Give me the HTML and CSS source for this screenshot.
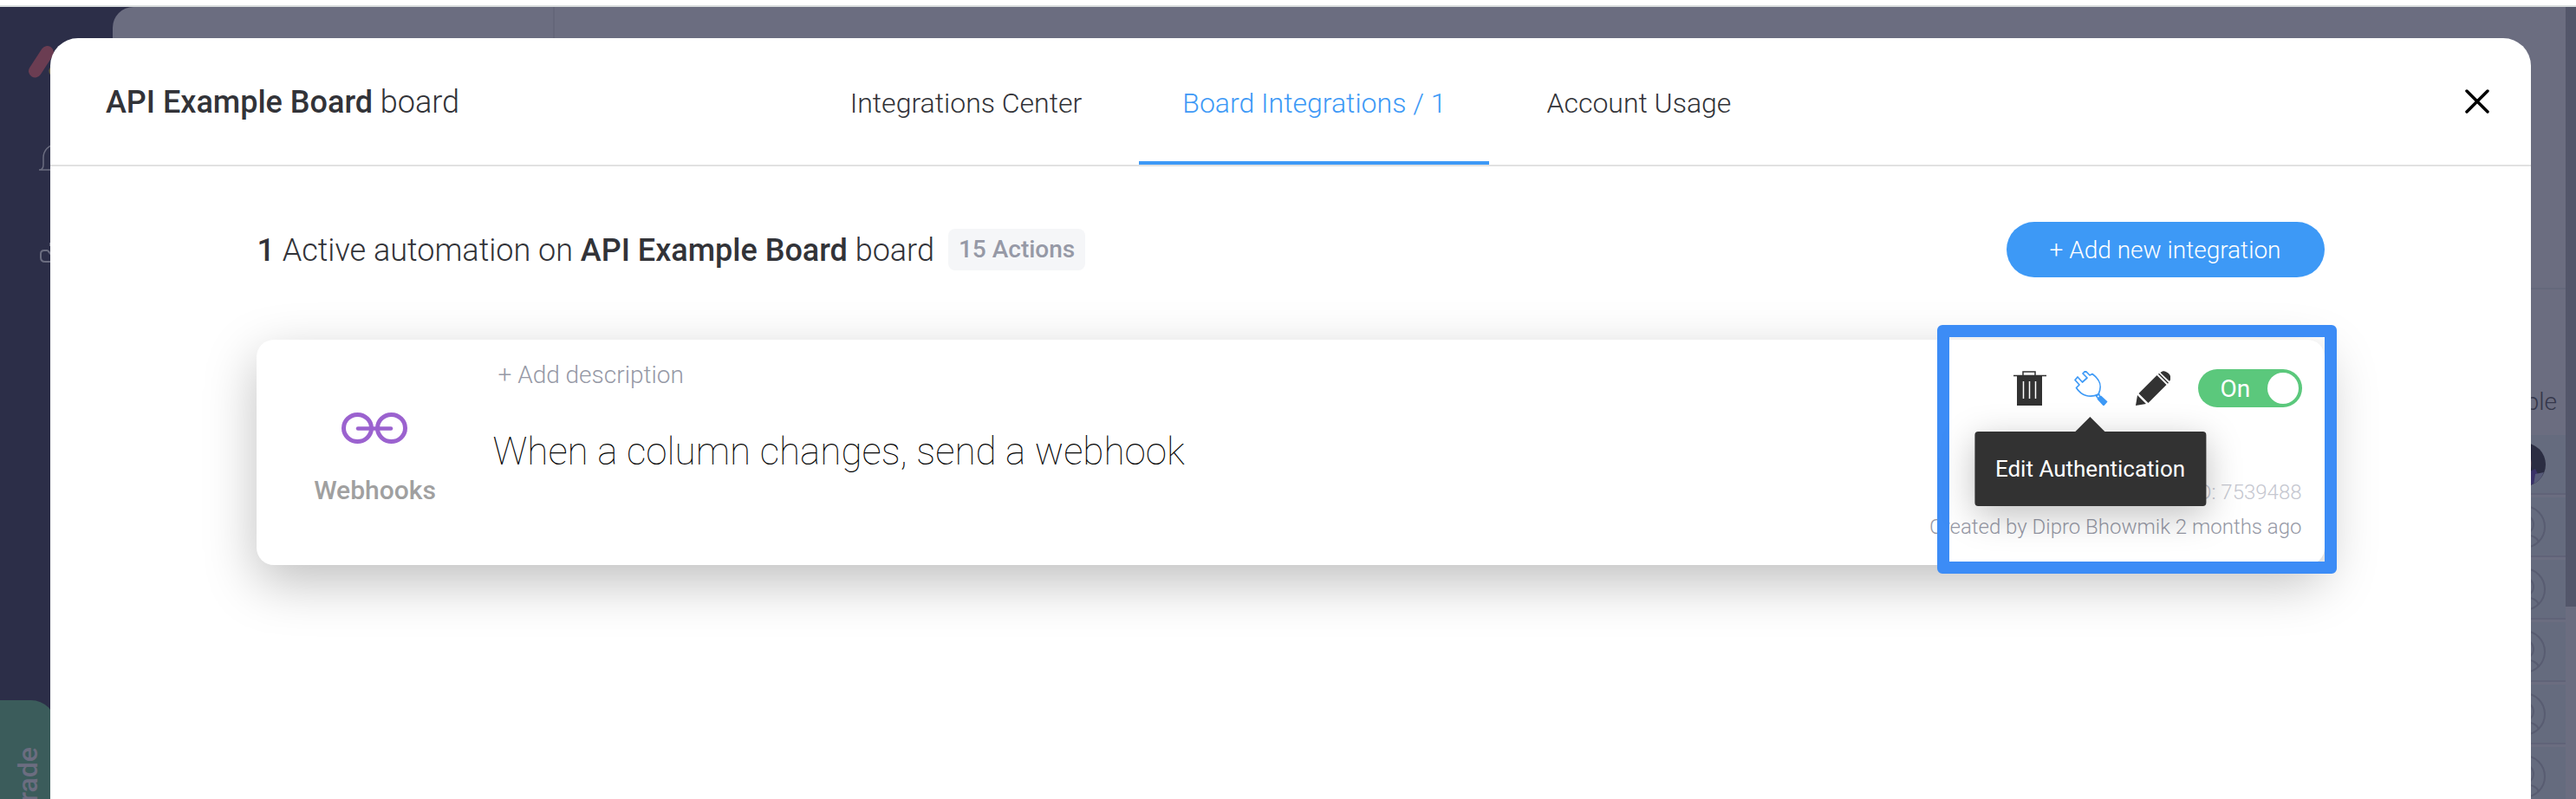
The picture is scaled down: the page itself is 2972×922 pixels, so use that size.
FILE: index.html
```html
<!DOCTYPE html>
<html lang="en">
<head>
<meta charset="utf-8">
<title>Board Integrations</title>
<link rel="stylesheet" href="styles.css">
</head>
<body>
<div class="browser-edge"></div>
<div class="stage">
  <div class="backdrop" aria-hidden="true">
    <div class="sidebar">
      <div class="sidebar-icons">
        <svg class="logo" width="96" height="48" viewBox="0 0 96 48">
          <path d="M22.5 12.500L8.500 34" stroke="#6b3d52" stroke-width="15" stroke-linecap="round"/>
          <path d="M46 12.500L32 34" stroke="#6c6440" stroke-width="15" stroke-linecap="round"/>
        </svg>
        <svg class="bell" width="40" height="40" viewBox="0 0 40 40" fill="none" stroke="#6b6d80" stroke-width="1.500">
          <path d="M1 31h38M1 31c4 0 5-2 5-6v-8C6 9 12 2 20 2s14 7 14 15v8c0 4 1 6 5 6M16 34a4 4 0 0 0 8 0"/>
        </svg>
        <svg class="inbox" width="40" height="26" viewBox="0 0 40 26" fill="none" stroke="#6b6d80" stroke-width="2">
          <path d="M10 10H6q-4 0-4 4v4q0 5 5 5h26q5 0 5-5v-4q0-4-4-4h-4M10 10l5 6h10l5-6M13 1v4"/>
        </svg>
      </div>
      <div class="upgrade"><span>Upgrade</span></div>
    </div>
    <div class="board">
      <div class="board-nav"></div>
      <div class="board-main">
        <div class="board-top"></div>
        <div class="people-head">People</div>
        <div class="people-row">
          <svg class="avatar" viewBox="0 0 50 50"><defs><clipPath id="round"><circle cx="25" cy="25" r="25"/></clipPath></defs><g clip-path="url(#round)"><path d="M0 0h50v50H0z" fill="#2b2d42"/><path d="M0 0h34v50H0z" fill="#20213a"/><path d="M28 14q8 3 5 16l-5 4z" fill="#4c3b4b"/><path d="M26 36l12-6 4 8-8 12h-8z" fill="#3a3268"/><path d="M38 36l10-2-6 12-6 3z" fill="#575b78"/></g></svg>
        </div>
        <div class="people-row"><svg class="person" viewBox="0 0 50 50"><circle cx="25" cy="25" r="24"/><circle cx="25" cy="22" r="11"/><path d="M8 42c5-11 29-11 34 0"/></svg></div>
        <div class="people-row"><svg class="person" viewBox="0 0 50 50"><circle cx="25" cy="25" r="24"/><circle cx="25" cy="22" r="11"/><path d="M8 42c5-11 29-11 34 0"/></svg></div>
        <div class="people-row"><svg class="person" viewBox="0 0 50 50"><circle cx="25" cy="25" r="24"/><circle cx="25" cy="22" r="11"/><path d="M8 42c5-11 29-11 34 0"/></svg></div>
        <div class="people-row"><svg class="person" viewBox="0 0 50 50"><circle cx="25" cy="25" r="24"/><circle cx="25" cy="22" r="11"/><path d="M8 42c5-11 29-11 34 0"/></svg></div>
        <div class="people-row"><svg class="person" viewBox="0 0 50 50"><circle cx="25" cy="25" r="24"/><circle cx="25" cy="22" r="11"/><path d="M8 42c5-11 29-11 34 0"/></svg></div>
      </div>
      <div class="scrollbar"><div class="thumb"></div></div>
    </div>
  </div>

  <div class="modal" role="dialog" aria-label="Integrations">
    <header class="modal-head">
      <h1 class="board-title"><b>API Example Board</b> board</h1>
      <nav class="tabs">
        <a class="tab" href="#center">Integrations Center</a>
        <a class="tab active" href="#board">Board Integrations / 1</a>
        <a class="tab" href="#usage">Account Usage</a>
      </nav>
      <button class="close" type="button" aria-label="Close">
        <svg width="28" height="28" viewBox="0 0 28 28" fill="none" stroke="#000" stroke-width="3.500" stroke-linecap="round"><path d="M2 2l24 24M26 2L2 26"/></svg>
      </button>
    </header>
    <main class="content">
      <div class="summary">
        <h2 class="summary-title"><b>1</b> Active automation on <b>API Example Board</b> board</h2>
        <span class="count">15 Actions</span>
        <button class="add" type="button">+ Add new integration</button>
      </div>
      <article class="card">
        <div class="source">
          <svg width="76" height="36" viewBox="0 0 76 36" fill="none" stroke="#9b62cf" stroke-width="5"><ellipse cx="18.500" cy="18" rx="16" ry="15.500"/><ellipse cx="57.500" cy="18" rx="16" ry="15.500"/><path d="M19 18.500h38" stroke-width="4.500" stroke-linecap="round"/></svg>
          <span>Webhooks</span>
        </div>
        <div class="recipe">
          <button class="describe" type="button">+ Add description</button>
          <p class="sentence">When a column changes, send a webhook</p>
        </div>
        <div class="side">
          <div class="actions">
            <button class="icon" type="button" aria-label="Delete">
              <svg width="40" height="40" viewBox="0 0 40 40"><path d="M5 5h29v35H5z" fill="#323232"/><path d="M1 5.500h38M12 5V1h14v4" fill="none" stroke="#323232" stroke-width="1.500"/><path d="M12.500 12v20M19.500 12v20M26.500 12v20" stroke="#fff" stroke-width="1.500"/></svg>
            </button>
            <div class="auth">
              <button class="icon" type="button" aria-labelledby="auth-tip">
                <svg width="40" height="40" viewBox="0 0 40 40" fill="none" stroke="#3d99f6" stroke-width="1.700" stroke-linejoin="round"><path d="M22 3.500c9.500 7 11.500 14 7 23.500-9.500 4.500-19.500 2-25.500-7.500l3.500-3.500-5-5.500 3-3.500 5.500 6 5.500-5-5-5 3-3 5 5z"/><path d="M26.500 29l3-2.500 1.500 4-2 1.500z"/><path d="M28.500 32.500l3.500-3 6.500 6-3.500 4z" fill="#3d99f6"/></svg>
              </button>
              <div class="tooltip" id="auth-tip" role="tooltip">Edit Authentication</div>
            </div>
            <button class="icon" type="button" aria-label="Edit">
              <svg width="40" height="40" viewBox="0 0 40 40" fill="#323232"><path d="M0 40l2-12 10 10zM3.500 26L24.500 5l11 11-21 21zM26 3.800l1-1 11 11-1 1zM28.500 2c3-3 6-2 9 .500s4 6.500 1.500 9.500z"/></svg>
            </button>
            <label class="toggle"><input type="checkbox" role="switch" checked><span class="toggle-text">On</span><span class="knob"></span></label>
          </div>
          <div class="meta">
            <p class="meta-id">ID: 7539488</p>
            <p class="meta-author">Created by Dipro Bhowmik 2 months ago</p>
          </div>
          <div class="highlight" aria-hidden="true"></div>
        </div>
      </article>
    </main>
  </div>
</div>
</body>
</html>
```
FILE: styles.css
```css
* { box-sizing: border-box; }

body {
  margin: 0;
  height: 100vh;
  display: flex;
  flex-direction: column;
  overflow: hidden;
  background: #fff;
  color: #323338;
  font-family: Roboto, "Liberation Sans", sans-serif;
  font-weight: 300;
}

h1, h2, p { margin: 0; font-weight: inherit; }
b { font-weight: 500; }
button {
  padding: 0;
  border: 0;
  background: none;
  color: inherit;
  font: inherit;
  cursor: pointer;
}
svg { display: block; }

.browser-edge {
  flex: none;
  height: 8px;
  border-bottom: 2px solid #dadede;
}

.stage {
  flex: 1;
  min-height: 0;
  display: grid;
  background: #2c2e48;
}
.backdrop, .modal { grid-area: 1 / 1; min-width: 0; min-height: 0; }

/* Dimmed application behind the dialog */
.backdrop { display: flex; overflow: hidden; }
.sidebar {
  width: 130px;
  flex: none;
  display: flex;
  flex-direction: column;
  justify-content: space-between;
}
.sidebar-icons { display: flex; flex-direction: column; padding-top: 40px; }
.logo { margin-left: 32px; }
.bell { margin: 69px 0 0 44px; }
.inbox { margin: 74px 0 0 45px; }
.upgrade {
  width: 64px;
  height: 114px;
  padding: 54px 0 0 14px;
  border-radius: 0 28px 0 0;
  background: #3b5c5b;
  color: #6b6d80;
  font-size: 32px;
  font-weight: 500;
  line-height: 36px;
}
.upgrade span { display: block; writing-mode: vertical-rl; rotate: 180deg; }

.board {
  flex: 1;
  display: flex;
  border-radius: 24px 0 0 0;
  background: #6b6d80;
  overflow: hidden;
}
.board-nav { width: 510px; border-right: 2px solid #646679; }
.board-main { flex: 1; }
.board-top { height: 326px; border-bottom: 2px solid #64687b; }
.people-head {
  height: 168px;
  padding: 110px 10px 0 0;
  color: #35374b;
  font-size: 28px;
  line-height: 40px;
  text-align: right;
}
.people-row {
  height: 72px;
  display: flex;
  justify-content: flex-end;
  padding: 9px 23px 0 0;
  border-bottom: 3px solid #6b6d80;
  background: #656b7e;
  box-shadow: inset 0 -2px #606378;
}
.avatar { width: 50px; height: 50px; }
.person { width: 50px; height: 50px; fill: none; stroke: #585c71; stroke-width: 2; }
.scrollbar { width: 12px; }
.thumb { height: 692px; background: #53566a; }

/* Dialog */
.modal {
  margin: 36px 52px 0 58px;
  border-radius: 32px 32px 0 0;
  background: #fff;
  position: relative;
}
.modal-head {
  display: grid;
  grid-template-columns: 1fr auto 1fr;
  height: 148px;
  padding: 0 48px;
  border-bottom: 2px solid #e1e1e1;
}
.board-title {
  align-self: center;
  padding: 2px 0 0 16px;
  font-size: 36px;
  line-height: 44px;
}
.tabs { display: flex; gap: 16px; }
.tab {
  display: flex;
  align-items: center;
  padding: 8px 50px 0;
  border-bottom: 4px solid transparent;
  color: #323338;
  font-size: 32px;
  text-decoration: none;
}
.tab.active { border-color: #3d99f6; color: #3d99f6; }
.close { align-self: center; justify-self: end; }

.content { padding: 64px 8.333% 0; }
.summary { display: flex; align-items: center; height: 64px; }
.summary-title { padding-top: 2px; font-size: 36px; line-height: 44px; }
.count {
  margin-left: 16px;
  padding: 0 12px;
  border-radius: 8px;
  background: #f5f6f8;
  color: #9699a6;
  font-size: 28px;
  font-weight: 500;
  line-height: 48px;
}
.add {
  margin-left: auto;
  height: 64px;
  padding: 0 50px;
  border-radius: 32px;
  background: #3d99f6;
  color: #fff;
  font-size: 28px;
}

.card {
  display: flex;
  height: 260px;
  margin-top: 72px;
  border-radius: 20px;
  background: #fff;
  box-shadow: 0 20px 60px rgba(0, 0, 0, .25);
}
.source {
  width: 272px;
  display: flex;
  flex-direction: column;
  align-items: center;
  gap: 34px;
  padding-top: 84px;
  color: #a0a0a0;
  font-size: 30px;
  font-weight: 500;
  line-height: 40px;
}
.recipe {
  flex: 1;
  display: flex;
  flex-direction: column;
  align-items: flex-start;
  gap: 42px;
  padding-top: 21px;
}
.describe { margin-left: 6px; color: #9699a6; font-size: 28px; line-height: 40px; }
.sentence { color: #000; font-size: 44px; font-weight: 100; line-height: 52px; }

.side {
  position: relative;
  display: flex;
  flex-direction: column;
  align-items: flex-end;
  padding: 34px 26px 0 0;
}
.actions { display: flex; align-items: center; }
.icon { width: 40px; height: 40px; margin-right: 30px; }
.icon:last-of-type { margin-right: 32px; }
.auth { position: relative; width: 72px; height: 40px; }
.tooltip {
  position: absolute;
  top: 70px;
  left: 20px;
  translate: -50% 0;
  z-index: 1;
  padding: 0 24px;
  border-radius: 4px;
  background: #323232;
  box-shadow: 0 10px 40px rgba(0, 0, 0, .25);
  color: #fff;
  font-size: 26px;
  font-weight: 400;
  line-height: 86px;
  white-space: nowrap;
}
.tooltip::before {
  content: "";
  position: absolute;
  left: 50%;
  bottom: 100%;
  margin-left: -17px;
  border: 17px solid transparent;
  border-top: 0;
  border-bottom-color: #323232;
}
.toggle {
  display: flex;
  align-items: center;
  justify-content: space-between;
  width: 120px;
  height: 44px;
  padding: 0 4px 0 26px;
  border-radius: 22px;
  background: #5bc87c;
  color: #fff;
  font-size: 28px;
  font-weight: 400;
}
.toggle input { position: absolute; opacity: 0; }
.knob { width: 36px; height: 36px; border-radius: 50%; background: #fff; }
.meta { padding-top: 78px; font-size: 24px; line-height: 40px; text-align: right; }
.meta-id { color: #c5c7d0; }
.meta-author { color: #9699a6; }
.highlight {
  position: absolute;
  inset: -17px -14px -10px auto;
  width: 461px;
  border: 14px solid #3c8cf6;
  border-radius: 6px;
}
```
